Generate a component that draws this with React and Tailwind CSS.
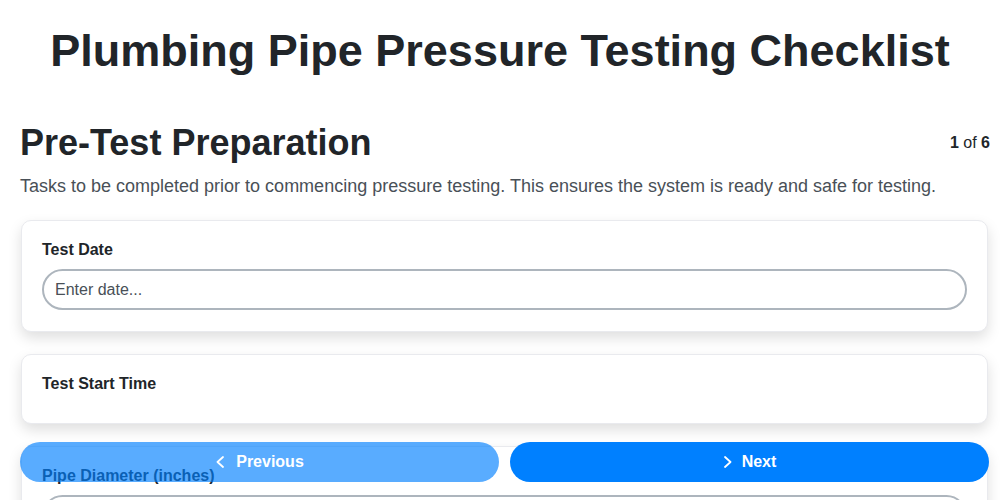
import React from "react";

function ChevronLeft() {
  return (
    <svg width="10" height="12" viewBox="0 0 10 12" fill="none" stroke="currentColor" strokeWidth="1.8" strokeLinecap="round" strokeLinejoin="round">
      <path d="M8 1 L2.5 6 L8 11" />
    </svg>
  );
}
function ChevronRight() {
  return (
    <svg width="10" height="12" viewBox="0 0 10 12" fill="none" stroke="currentColor" strokeWidth="1.8" strokeLinecap="round" strokeLinejoin="round">
      <path d="M2 1 L7.5 6 L2 11" />
    </svg>
  );
}

function Card({ label, children }) {
  return (
    <div className={"bg-white border border-[#e9eaee] rounded-[10px] shadow-[0_6px_14px_rgba(0,0,0,0.13)] px-5 pt-[19px] " + (children ? "pb-[21px]" : "pb-[20px]")}>
      <div className="text-[16px] leading-[19px] font-bold text-[#212529] mb-2.5">{label}</div>
      {children}
    </div>
  );
}

function Input({ placeholder }) {
  return (
    <input
      className="w-full h-[41px] rounded-full border-2 border-[#adb5bd] px-[11px] text-[16px] text-[#495057] placeholder:text-[#495057] outline-none bg-white"
      placeholder={placeholder}
    />
  );
}

export default function App() {
  return (
    <div className="min-h-screen bg-white font-['Liberation_Sans',Arial,sans-serif] text-[#212529]">
      <h1 className="pt-[24px] text-center text-[45px] leading-[53px] font-bold">
        Plumbing Pipe Pressure Testing Checklist
      </h1>
      <div className="pl-5 pr-2.5 pt-[44px]">
        <div className="flex items-center justify-between">
          <h2 className="text-[36px] leading-[43px] font-bold">Pre-Test Preparation</h2>
          <div className="text-[16px]">
            <span className="font-bold">1</span> of <span className="font-bold">6</span>
          </div>
        </div>
        <p className="mt-[9px] text-[18px] leading-[27px] text-[#495057]">
          Tasks to be completed prior to commencing pressure testing. This ensures the system is ready and safe for testing.
        </p>
        <div className="mt-[20px] pl-px pr-[2px] flex flex-col gap-[22px]">
          <Card label="Test Date">
            <Input placeholder="Enter date..." />
          </Card>
          <Card label="Test Start Time" />
          <Card label="Pipe Diameter (inches)">
            <Input placeholder="Enter diameter..." />
          </Card>
          <Card label="Test Pressure (psi)">
            <Input placeholder="Enter pressure..." />
          </Card>
        </div>
        <div className="h-[100px]" />
      </div>
      <div className="fixed left-5 right-[11px] bottom-[18px] flex gap-[11px]">
        <button className="flex-1 h-10 rounded-full bg-[#0080ff] opacity-65 text-white font-bold text-[16px] flex items-center justify-center gap-[11px]">
          <ChevronLeft />
          Previous
        </button>
        <button className="flex-1 h-10 rounded-full bg-[#0080ff] text-white font-bold text-[16px] flex items-center justify-center gap-[9px]">
          <ChevronRight />
          Next
        </button>
      </div>
    </div>
  );
}
